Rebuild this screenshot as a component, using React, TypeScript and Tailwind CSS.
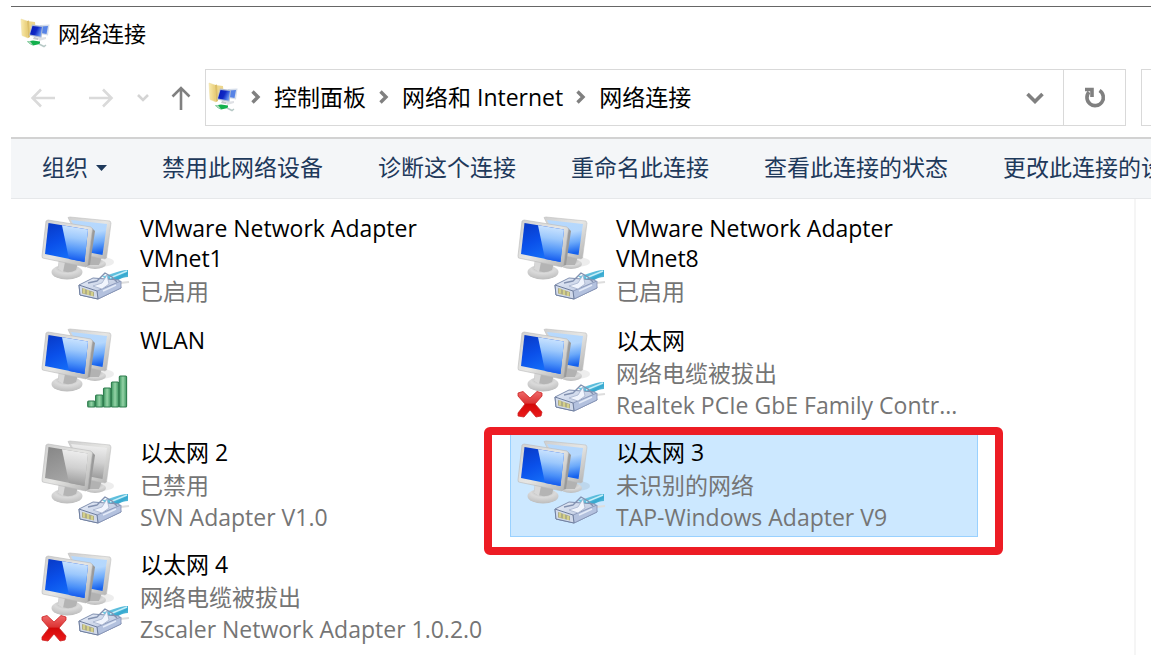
import React from "react";

type Overlay = "cable" | "signal" | "unplugged";

interface Connection {
  name: string;
  lines: string[];
  overlay: Overlay;
  disabled?: boolean;
  selected?: boolean;
}

const connections: Connection[] = [
  { name: "VMware Network Adapter VMnet1", lines: ["已启用"], overlay: "cable" },
  { name: "VMware Network Adapter VMnet8", lines: ["已启用"], overlay: "cable" },
  { name: "WLAN", lines: [], overlay: "signal" },
  { name: "以太网", lines: ["网络电缆被拔出", "Realtek PCIe GbE Family Contr..."], overlay: "unplugged" },
  { name: "以太网 2", lines: ["已禁用", "SVN Adapter V1.0"], overlay: "cable", disabled: true },
  { name: "以太网 3", lines: ["未识别的网络", "TAP-Windows Adapter V9"], overlay: "cable", selected: true },
  { name: "以太网 4", lines: ["网络电缆被拔出", "Zscaler Network Adapter 1.0.2.0"], overlay: "unplugged" },
];

const commands = ["禁用此网络设备", "诊断这个连接", "重命名此连接", "查看此连接的状态", "更改此连接的设置"];

const crumbs = ["控制面板", "网络和 Internet", "网络连接"];

function Gradients() {
  return (
    <svg width="0" height="0" className="absolute" aria-hidden="true">
      <defs>
        <linearGradient id="frame" x1="0" y1="0" x2="1" y2="1">
          <stop offset="0" stopColor="#cfcfcf" />
          <stop offset="0.5" stopColor="#e6e6e4" />
          <stop offset="1" stopColor="#b0b0b0" />
        </linearGradient>
        <linearGradient id="blue" x1="0" y1="0" x2="0.5" y2="1">
          <stop offset="0" stopColor="#0838c4" />
          <stop offset="0.5" stopColor="#0a50ea" />
          <stop offset="1" stopColor="#1672fa" />
        </linearGradient>
        <linearGradient id="blueGlare" x1="0.5" y1="0" x2="0.4" y2="1">
          <stop offset="0" stopColor="#cfe6ff" />
          <stop offset="0.35" stopColor="#9cc8fc" />
          <stop offset="0.7" stopColor="#4a90f8" />
          <stop offset="1" stopColor="#0a50ec" />
        </linearGradient>
        <linearGradient id="blueBack" x1="0.3" y1="0" x2="0.5" y2="1">
          <stop offset="0" stopColor="#b7d9fd" />
          <stop offset="0.4" stopColor="#b4d7fd" />
          <stop offset="0.7" stopColor="#6ba9fa" />
          <stop offset="1" stopColor="#1461ee" />
        </linearGradient>
        <linearGradient id="gray" x1="0" y1="0" x2="0.5" y2="1">
          <stop offset="0" stopColor="#868686" />
          <stop offset="1" stopColor="#a9a9a9" />
        </linearGradient>
        <linearGradient id="grayGlare" x1="0.5" y1="0" x2="0.4" y2="1">
          <stop offset="0" stopColor="#f0f0f0" />
          <stop offset="0.5" stopColor="#d0d0d0" />
          <stop offset="1" stopColor="#969696" />
        </linearGradient>
        <radialGradient id="base" cx="0.5" cy="0.2" r="0.8">
          <stop offset="0" stopColor="#adadad" />
          <stop offset="0.5" stopColor="#dadada" />
          <stop offset="1" stopColor="#bcbcbc" />
        </radialGradient>
        <linearGradient id="plugTop" x1="0" y1="0" x2="1" y2="1">
          <stop offset="0" stopColor="#e8eef9" />
          <stop offset="1" stopColor="#a9b7d4" />
        </linearGradient>
        <linearGradient id="cord" x1="0" y1="0" x2="1" y2="1">
          <stop offset="0" stopColor="#a9e4f3" />
          <stop offset="0.6" stopColor="#35a9d0" />
          <stop offset="1" stopColor="#8bd0e4" />
        </linearGradient>
        <linearGradient id="bar" x1="0" y1="0" x2="1" y2="0">
          <stop offset="0" stopColor="#3f9862" />
          <stop offset="0.5" stopColor="#94d3a6" />
          <stop offset="1" stopColor="#3f9862" />
        </linearGradient>
        <linearGradient id="cross" x1="0" y1="0" x2="0" y2="1">
          <stop offset="0" stopColor="#ef6a6a" />
          <stop offset="0.45" stopColor="#dc3434" />
          <stop offset="0.5" stopColor="#d30808" />
          <stop offset="1" stopColor="#ec1a1a" />
        </linearGradient>
        <linearGradient id="folder" x1="0" y1="0" x2="1" y2="0">
          <stop offset="0" stopColor="#f9ebae" />
          <stop offset="1" stopColor="#e6c970" />
        </linearGradient>
        <linearGradient id="miniScreen" x1="0" y1="0" x2="1" y2="0.4">
          <stop offset="0" stopColor="#0618b8" />
          <stop offset="0.6" stopColor="#1029c4" />
          <stop offset="1" stopColor="#5e8df0" />
        </linearGradient>
      </defs>
    </svg>
  );
}

function Plug() {
  return (
    <g strokeLinejoin="round">
      <path d="M80 68 L89 67" stroke="#dddddd" strokeWidth="2" />
      <path d="M62 61 C70 61 77 55 88 55 L88 62 C81 62 77 66 71 69Z" fill="url(#cord)" />
      <path d="M70 63 L87 56" stroke="#c4eef8" strokeWidth="1.4" />
      <path d="M39 70 L53 63 L79 65 L81 73 L58 84 L40 80Z" fill="url(#plugTop)" stroke="#8190b0" strokeWidth="1" />
      <path d="M57 76 L81 66 L81 73 L58 84Z" fill="#b3c1de" stroke="#8391b2" strokeWidth="0.8" />
      <path d="M39 70 L57 76 L58 84 L40 80Z" fill="#d2daea" stroke="#6f7f9f" strokeWidth="1" />
      <path d="M42 73 L54 77 L54 81.500 L42 78.500Z" fill="#b0ad84" />
      <path d="M44 73.500V78.500 M48 75V80 M52 77V81" stroke="#dcd98c" strokeWidth="1.6" />
      <path d="M48 68 L57 66 L65 58 L72 62 L77 67" fill="none" stroke="#8291b0" strokeWidth="1.4" />
      <path d="M53 71 L62 68 L67 60 L69 69 L62 74Z" fill="#f1f5fd" stroke="#a1aec9" strokeWidth="0.7" />
      <path d="M63 76 L76 70" stroke="#e4ebf8" strokeWidth="1.6" />
    </g>
  );
}

function SignalBars() {
  const tops = [74, 68, 61, 55, 49];
  return (
    <g>
      {tops.map((top, i) => (
        <rect key={top} x={47.7 + i * 7.9} y={top} width="7.3" height={80 - top} rx="1" fill="url(#bar)" stroke="#2f7d4e" strokeWidth="1.1" />
      ))}
    </g>
  );
}

function RedCross() {
  return (
    <path
      d="M2 66 L7 64.500 L14 71 L21 64.500 L26 66 L26 69 L19 77 L26 85 L25 89 L20 90 L14 83 L8 90 L2 89 L2 86 L9 77 L2 69Z"
      fill="url(#cross)"
      stroke="#cc2222"
      strokeWidth="0.8"
      strokeLinejoin="round"
    />
  );
}

function ConnectionIcon({ overlay, disabled }: { overlay: Overlay; disabled?: boolean }) {
  return (
    <svg width="92" height="92" viewBox="0 0 92 92" className="shrink-0" aria-hidden="true">
      <ellipse cx="61" cy="47" rx="13" ry="5" fill="#000000" opacity="0.07" />
      <ellipse cx="55" cy="49" rx="11" ry="5" fill="url(#base)" />
      <path d="M50 40 L62 42 L59 50 L50 50Z" fill="#b2b2b2" />
      <path d="M28 2.500 L30 2 L70 6 L71 8 L66.500 43 L65 44 L46 40Z" fill="url(#frame)" stroke="#c0c0c0" strokeWidth="0.6" />
      <path d="M31 5 L67 9 L62.500 40 L47 37Z" fill={disabled ? "url(#grayGlare)" : "url(#blueBack)"} />
      <ellipse cx="27" cy="57" rx="15.500" ry="7.500" fill="url(#base)" />
      <path d="M19 44 L38 48 L36 55 Q27 60 18 54Z" fill="#b4b4b4" />
      <path d="M19 46 L25 47 L23 57 L18 54Z" fill="#d8d8d8" />
      <path d="M45 51.500 L52 13 L55 16 L50 50Z" fill="#9a9a9a" />
      <path d="M6 6 L8 5 L51 12 L52.500 14 L47.500 50 L46 52 L2.500 43 L2 41Z" fill="url(#frame)" stroke="#b8b8b8" strokeWidth="0.6" />
      <path d="M8.500 8 L48 14.500 L44.500 47 L5 39Z" fill={disabled ? "url(#gray)" : "url(#blue)"} />
      <path d="M22 10.200 L48 14.500 L44.500 47 L29 44Z" fill={disabled ? "url(#grayGlare)" : "url(#blueGlare)"} />
      {overlay === "signal" ? <SignalBars /> : <Plug />}
      {overlay === "unplugged" && <RedCross />}
    </svg>
  );
}

function FolderIcon() {
  return (
    <svg width="30" height="30" viewBox="0 0 30 30" className="shrink-0" aria-hidden="true">
      <path d="M7 3 L15 4 L16 16 L7 18Z" fill="#edd68d" />
      <path d="M1 1 L7 3 L8 20 L2 17.500Z" fill="url(#folder)" stroke="#ecdda0" strokeWidth="0.5" />
      <path d="M7 3 L9 2.500 L10 19 L8 20Z" fill="#dcbf68" />
      <path d="M20 7 L29.500 6.500 L28 17.500 L20 16Z" fill="#d5ddea" />
      <path d="M21 8.500 L28 8 L26.500 16 L21 15Z" fill="#5683e6" />
      <path d="M12 6.500 L23 8 L21.500 20 L9 17.500Z" fill="#aebbd3" />
      <path d="M12.500 8 L22 9 L20.500 18.500 L10 16.500Z" fill="url(#miniScreen)" />
      <path d="M14 19 L19 20 L18 22 L13 21Z" fill="#c4c7cc" />
      <path d="M18 20 L26 19 L26 21 L19 23Z" fill="#dfe1e5" />
      <path d="M7 23.500 L13 22.500 L20 23.500 L20 26 L13 27.500 L10 26Z" fill="#12b04c" />
      <path d="M7 23.500 L10 23 L13 27 L10 26Z" fill="#a9d5b8" />
      <path d="M19 26 L24 28.500 L26 27" fill="none" stroke="#b7c9c6" strokeWidth="1.500" />
    </svg>
  );
}

function Chevron({ className }: { className?: string }) {
  return (
    <svg width="10" height="14" viewBox="0 0 10 14" fill="none" stroke="#808080" strokeWidth="3.400" className={className} aria-hidden="true">
      <path d="M1.500 1.500 L7 7 L1.500 12.500" />
    </svg>
  );
}

function Tile({ item }: { item: Connection }) {
  const state = item.selected ? "border-[#99d1ff] bg-[#cce8ff]" : "border-transparent";
  return (
    <li className="relative">
      <button type="button" className={`flex h-[103px] w-full items-start border pt-[2px] pl-[5px] text-left ${state}`}>
        <span className="pt-[2px]">
          <ConnectionIcon overlay={item.overlay} disabled={item.disabled} />
        </span>
        <span className="flex min-w-0 flex-1 flex-col gap-[2px] pl-2">
          <span className="leading-[30px] text-black">{item.name}</span>
          {item.lines.length > 0 && (
            <span className="flex flex-col leading-8 text-[#757575]">
              {item.lines.map((line) => (
                <span key={line} className="whitespace-nowrap">
                  {line}
                </span>
              ))}
            </span>
          )}
        </span>
      </button>
      {item.selected && (
        <span className="pointer-events-none absolute -top-[7px] -right-[25px] -bottom-[18px] -left-[26px] rounded-md border-8 border-[#ed1c24]" />
      )}
    </li>
  );
}

export default function App() {
  return (
    <div className="min-h-screen overflow-hidden bg-white px-[10px] pt-[6px] pl-[11px] font-['Open_Sans','Noto_Sans_CJK_SC',sans-serif] text-[23px] text-black">
      <Gradients />
      <div className="flex min-h-[649px] flex-col overflow-hidden border-t border-[#666666]">
        <header className="flex h-[62px] items-center gap-2 pb-[10px] pl-[9px]">
          <FolderIcon />
          <h1 className="text-[22px] leading-8">网络连接</h1>
        </header>

        <nav className="flex h-[57px] items-stretch" aria-label="地址">
          <div className="flex w-[194px] shrink-0 items-center pl-5">
            <button type="button" aria-label="后退">
              <svg width="26" height="22" viewBox="0 0 26 22" fill="none" stroke="#dadada" strokeWidth="2.600">
                <path d="M24 11H2 M10 2.500L1.500 11L10 19.500" />
              </svg>
            </button>
            <button type="button" aria-label="前进" className="ml-8">
              <svg width="26" height="22" viewBox="0 0 26 22" fill="none" stroke="#dadada" strokeWidth="2.600">
                <path d="M0 11H22 M14 2.500L22.500 11L14 19.500" />
              </svg>
            </button>
            <button type="button" aria-label="最近浏览的位置" className="ml-[22px]">
              <svg width="12" height="10" viewBox="0 0 12 10" fill="none" stroke="#d4d4d4" strokeWidth="2.600">
                <path d="M1 2L6 7L11 2" />
              </svg>
            </button>
            <button type="button" aria-label="上移" className="ml-[22px]">
              <svg width="20" height="26" viewBox="0 0 20 26" fill="none" stroke="#808080" strokeWidth="2.600">
                <path d="M10 25V3 M1.500 11.500L10 3L18.500 11.500" />
              </svg>
            </button>
          </div>
          <div className="flex min-w-0 flex-1 border border-[#d9d9d9]">
            <div className="flex min-w-0 flex-1 items-center pb-[2px] pl-[2px]">
              <FolderIcon />
              {crumbs.map((crumb) => (
                <span key={crumb} className="flex items-center">
                  <Chevron className="mx-[13px]" />
                  <a href="#" className="leading-8 whitespace-nowrap">
                    {crumb}
                  </a>
                </span>
              ))}
            </div>
            <button type="button" aria-label="以前的位置" className="flex w-14 items-center justify-center">
              <svg width="18" height="12" viewBox="0 0 18 12" fill="none" stroke="#808080" strokeWidth="3.600">
                <path d="M1.500 2L9 9.500L16.500 2" />
              </svg>
            </button>
            <button type="button" aria-label="刷新" className="flex w-[62px] items-center justify-center border-l border-[#d9d9d9]">
              <svg width="22" height="22" viewBox="0 0 22 22" fill="none" stroke="#808080" strokeWidth="3.600">
                <path d="M15.500 3.500A8.200 8.200 0 1 1 5 5" />
                <path d="M1 2.500H8V10" />
              </svg>
            </button>
          </div>
          <input type="search" aria-label="搜索" className="ml-[15px] w-[10px] shrink-0 border border-r-0 border-[#d9d9d9]" />
        </nav>

        <div className="mt-[11px] flex h-[62px] shrink-0 items-center gap-[55px] overflow-hidden border-t-2 border-b border-t-[#d2d2d2] border-b-[#e6e8ea] bg-[#f4f6f8] pb-[2px] pl-[31px] text-[#1e395b]">
          <button type="button" className="flex shrink-0 items-center gap-2">
            组织
            <svg width="11" height="6" viewBox="0 0 11 6" fill="#1e395b" aria-hidden="true">
              <path d="M0 0H11L5.500 6Z" />
            </svg>
          </button>
          {commands.map((command) => (
            <button key={command} type="button" className="shrink-0 whitespace-nowrap">
              {command}
            </button>
          ))}
        </div>

        <main className="mr-[15px] flex-1 border-r-2 border-[#f5f5f5] pt-[11px] pl-[23px]">
          <ul className="grid grid-cols-[repeat(auto-fill,468px)] gap-x-2 gap-y-[9px]">
            {connections.map((item) => (
              <Tile key={item.name} item={item} />
            ))}
          </ul>
        </main>
      </div>
    </div>
  );
}
